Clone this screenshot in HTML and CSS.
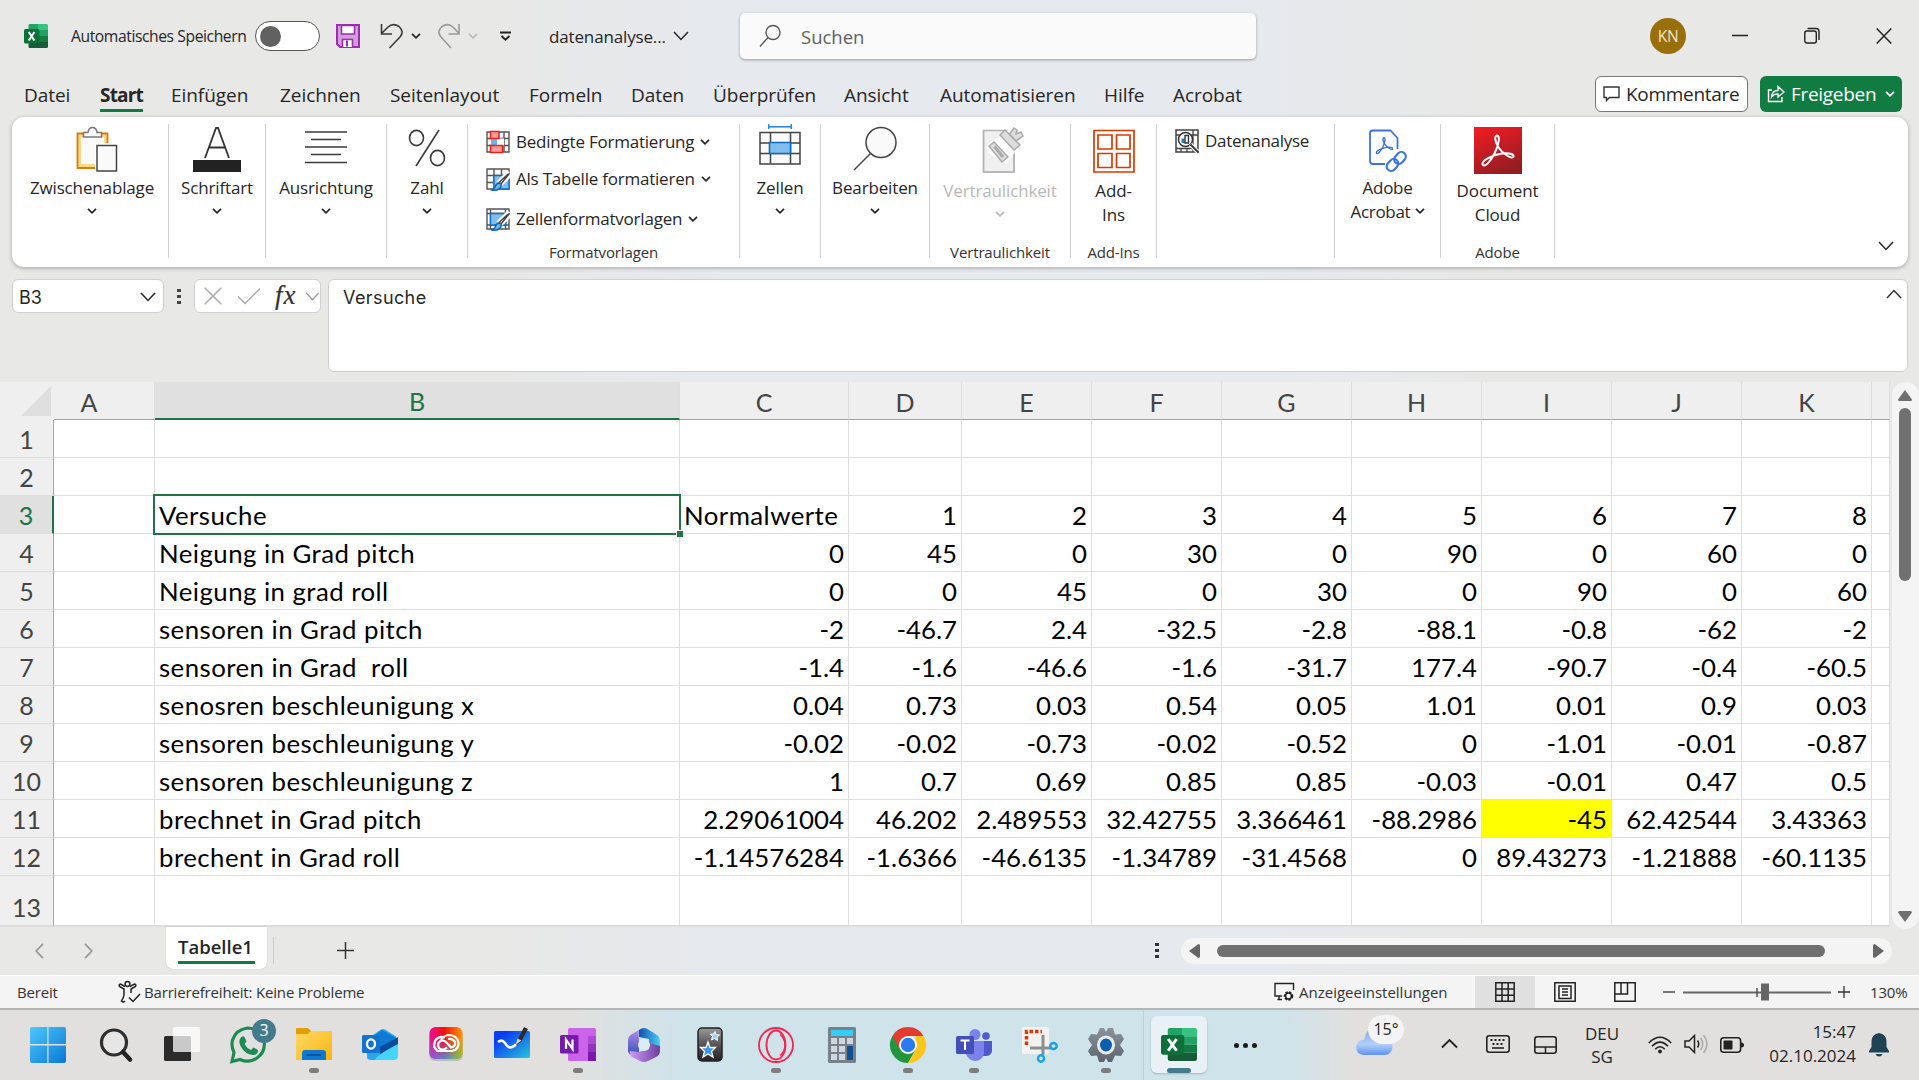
FILE: index.html
```html
<!DOCTYPE html>
<html lang="de">
<head>
<meta charset="utf-8">
<title>datenanalyse - Excel</title>
<link rel="stylesheet" href="styles.css">
</head>
<body>
<svg class="defs" width="0" height="0" aria-hidden="true">
  <defs>
    <linearGradient id="win" x1="0" y1="0" x2="1" y2="1"><stop offset="0" stop-color="#4cc8fb"/><stop offset="1" stop-color="#0a78d4"/></linearGradient>
    <linearGradient id="red" x1="0.3" y1="0" x2="0.7" y2="1"><stop offset="0" stop-color="#ec1c24"/><stop offset="1" stop-color="#8f1d22"/></linearGradient>
    <linearGradient id="fold" x1="0" y1="0" x2="1" y2="1"><stop offset="0" stop-color="#ffd968"/><stop offset="1" stop-color="#f9b50b"/></linearGradient>
    <linearGradient id="board" x1="0" y1="0" x2="1" y2="1"><stop offset="0.2" stop-color="#0b3cf5"/><stop offset="1" stop-color="#28c4d8"/></linearGradient>
    <linearGradient id="cc1" x1="0" y1="0" x2="1" y2="0"><stop offset="0" stop-color="#e8109c"/><stop offset="0.45" stop-color="#fb0d0d"/><stop offset="1" stop-color="#ff9a00"/></linearGradient>
    <linearGradient id="cc2" x1="0" y1="0" x2="1" y2="0"><stop offset="0" stop-color="#8a5cf0"/><stop offset="0.5" stop-color="#38a5f0"/><stop offset="1" stop-color="#6fd43c"/></linearGradient>
    <linearGradient id="fade" x1="0" y1="0" x2="0" y2="1"><stop offset="0.3" stop-color="#fff" stop-opacity="0"/><stop offset="1" stop-color="#fff"/></linearGradient>
    <mask id="ccm"><rect width="36" height="36" fill="url(#fade)"/></mask>
    <linearGradient id="m1" x1="0" y1="0" x2="1" y2="0"><stop offset="0" stop-color="#0f4fae"/><stop offset="1" stop-color="#4bd0f5"/></linearGradient>
    <linearGradient id="m2" x1="0" y1="0" x2="0" y2="1"><stop offset="0" stop-color="#b48be8"/><stop offset="1" stop-color="#2f4fb8"/></linearGradient>
    <linearGradient id="m3" x1="0" y1="0" x2="1" y2="0"><stop offset="0" stop-color="#cf9af2"/><stop offset="1" stop-color="#6b3fa0"/></linearGradient>
    <linearGradient id="dark" x1="0" y1="0" x2="0" y2="1"><stop offset="0" stop-color="#9a9a9a"/><stop offset="0.5" stop-color="#555"/><stop offset="1" stop-color="#222"/></linearGradient>
    <linearGradient id="cloud" x1="0" y1="0" x2="0" y2="1"><stop offset="0" stop-color="#7aa6f5"/><stop offset="0.6" stop-color="#b3cff9"/><stop offset="1" stop-color="#5d94f0"/></linearGradient>
    <linearGradient id="gear" x1="0" y1="0" x2="0" y2="1"><stop offset="0" stop-color="#8a929c"/><stop offset="1" stop-color="#5c656f"/></linearGradient>
    <symbol id="chev" viewBox="0 0 10 6"><path d="M1 .8 5 4.8 9 .8" fill="none" stroke="currentColor" stroke-width="1.7"/></symbol>
    <symbol id="chevL" viewBox="0 0 16 10"><path d="M1 1 8 8.500 15 1" fill="none" stroke="currentColor" stroke-width="1.500"/></symbol>
    <symbol id="excel" viewBox="0 0 24 24">
      <path d="M4.500 1.500Q4.500 0 6 0H14V6H4.500z" fill="#21a366"/><path d="M14 0H22.500Q24 0 24 1.500V6H14z" fill="#33c481"/>
      <path d="M4.500 6H14V12H4.500z" fill="#107c41"/><path d="M14 6H24V12H14z" fill="#21a366"/><path d="M4.500 12H14V18H4.500z" fill="#185c37"/><path d="M14 12H24V18H14z" fill="#107c41"/>
      <path d="M4.500 18H24V22.500Q24 24 22.500 24H6Q4.500 24 4.500 22.500z" fill="#185c37"/>
      <rect y="5" width="15.500" height="14.500" rx="1.500" fill="#0c7038"/><path d="M4.800 8 10.400 16.500M10.400 8 4.800 16.500" stroke="#fff" stroke-width="2"/>
    </symbol>
    <symbol id="brush" viewBox="0 0 24 22">
      <path d="M24 4 13 15" stroke="#fff" stroke-width="7"/><path d="M23 5 15 15l-2-1.500L20 7q2-2 3-2z" fill="#fff" stroke="#444" stroke-width="1.400"/>
      <path d="M14.500 14.500q2 3-1.500 5.500-4 2-7 1 3-1 3.500-4 1.500-3.500 5-2.500z" fill="#6db4ea" stroke="#0f64b5" stroke-width="1.400"/>
    </symbol>
    <symbol id="acro" viewBox="0 0 34 34">
      <path d="M2 31C-1 27 11 21 21 19.500 28 18.500 33 20 32.500 22.500 31.500 26 22 20 17.500 13.500 13.500 7 13.500 1.500 16 1.500 19 1.500 18.500 9 14 18.500 9.500 27.500 4.500 33 2 31z" fill="none" stroke="currentColor"/>
    </symbol>
  </defs>
</svg>

<div class="app">
  <header class="titlebar">
    <svg class="ic c1" width="24" height="24"><use href="#excel"/></svg>
    <span class="autosave">Automatisches Speichern</span>
    <span class="toggle"><i></i></span>
    <svg class="ic" width="24" height="24" viewBox="0 0 24 24"><path d="M1 1H23V23H4L1 20z" fill="#d59adf" stroke="#9b2fae" stroke-width="2"/><path d="M5.500 1.500H18.500V10H5.500zM6.500 23V15.500H16.500V23" fill="#fff" stroke="#9b2fae" stroke-width="1.600"/><path d="M10 16.500h2v6h-2z" fill="#9b2fae"/></svg>
    <svg class="ic" width="24" height="26" viewBox="0 0 24 26"><path d="M1.500 1V11H12M1.500 10.500 8 4q5-4.500 11-.5 5.500 5 1 10.500L9.500 25" fill="none" stroke="#3b3b3b" stroke-width="1.600"/></svg>
    <svg class="ic tiny" width="10" height="6"><use href="#chev"/></svg>
    <svg class="ic dim" width="24" height="26" viewBox="0 0 24 26"><path d="M22 1V11H11.500M22 10.500 16 4q-5-4.500-11-.5-5.500 5-1 10.500L14 25" fill="none" stroke="#999" stroke-width="1.600"/></svg>
    <svg class="ic tiny faint" width="10" height="6"><use href="#chev"/></svg>
    <svg class="ic" width="11" height="11" viewBox="0 0 11 11"><path d="M0 1.500H11M1.500 5 5.500 8.700 9.500 5" fill="none" stroke="#222" stroke-width="1.900"/></svg>
    <span class="docname">datenanalyse...</span>
    <svg class="ic" width="16" height="10"><use href="#chevL"/></svg>
    <div class="search"><svg width="22" height="24" viewBox="0 0 22 24"><circle cx="14" cy="8.500" r="7" fill="none" stroke="#555" stroke-width="1.400"/><path d="M9 13.500 1 22.500" stroke="#555" stroke-width="1.400"/></svg><span>Suchen</span></div>
    <span class="avatar">KN</span>
    <svg class="ic" width="16" height="18" viewBox="0 0 16 18"><path d="M0 8.500H16" stroke="#222" stroke-width="1.500"/></svg>
    <svg class="ic" width="16" height="18" viewBox="0 0 16 18"><rect x=".8" y="4" width="11.500" height="12" rx="2" fill="none" stroke="#222" stroke-width="1.400"/><path d="M3.500 1.500H12q3 0 3 3V13" fill="none" stroke="#222" stroke-width="1.400"/></svg>
    <svg class="ic" width="16" height="18" viewBox="0 0 16 18"><path d="M.7 1.500 15.300 16.500M15.300 1.500.7 16.500" stroke="#222" stroke-width="1.500"/></svg>
  </header>

  <nav class="tabs">
    <span>Datei</span><span class="on">Start</span><span>Einfügen</span><span>Zeichnen</span><span>Seitenlayout</span><span>Formeln</span><span>Daten</span><span>Überprüfen</span><span>Ansicht</span><span>Automatisieren</span><span>Hilfe</span><span>Acrobat</span>
    <div class="btn comments"><svg width="17" height="16" viewBox="0 0 17 16"><path d="M1 1H16V11.500H6.500L3.500 14.500V11.500H1z" fill="none" stroke="#333" stroke-width="1.400"/></svg>Kommentare</div>
    <div class="btn share"><svg width="18" height="18" viewBox="0 0 18 18"><path d="M5 5H1.500V16.500H15V12" fill="none" stroke="#fff" stroke-width="1.400"/><path d="M4.500 12Q5 5.500 11 5.500V1.500L17 7l-6 5V8.800Q7 8.500 4.500 12z" fill="none" stroke="#fff" stroke-width="1.300"/></svg>Freigeben<svg width="10" height="6"><use href="#chev"/></svg></div>
  </nav>

  <section class="ribbon">
    <div class="grp first">
      <div class="big"><svg width="42" height="48" viewBox="0 0 42 48"><path d="M1.500 7.500H31.500V42H1.500z" fill="#fbd98c" stroke="#e07b00" stroke-width="1.800"/><path d="M5 11H28V38H5z" fill="#fafafa"/><path d="M7.500 11V6.500H12Q12.500 1.500 16.500 1.500 20.500 1.500 21 6.500H25.500V11z" fill="#fff" stroke="#777" stroke-width="1.500"/><path d="M19 17H42V47H19z" fill="#fff"/><path d="M21 19.500H40.500V45H21z" fill="#fafafa" stroke="#444" stroke-width="1.500"/></svg></div>
      <p>Zwischenablage</p><svg class="cv" width="10" height="6"><use href="#chev"/></svg>
    </div>
    <div class="grp">
      <div class="big"><svg width="48" height="48" viewBox="0 0 48 48"><path d="M12 32 23 2H25L36 32M16 21.500H32" fill="none" stroke="#333" stroke-width="1.800"/><rect y="34" width="48" height="12" fill="#222"/></svg></div>
      <p>Schriftart</p><svg class="cv" width="10" height="6"><use href="#chev"/></svg>
    </div>
    <div class="grp">
      <div class="big"><svg width="42" height="48" viewBox="0 0 42 48"><path d="M0 6H42M6 13.500H36M0 21H42M6 28.500H36M0 36.500H42" stroke="#3b3b3b" stroke-width="1.500"/></svg></div>
      <p>Ausrichtung</p><svg class="cv" width="10" height="6"><use href="#chev"/></svg>
    </div>
    <div class="grp">
      <div class="big"><svg width="38" height="48" viewBox="0 0 38 48"><g fill="none" stroke="#3b3b3b" stroke-width="1.600"><ellipse cx="8.500" cy="12" rx="7" ry="7.600"/><ellipse cx="29.500" cy="32" rx="7" ry="7.600"/><path d="M31 4 8 40"/></g></svg></div>
      <p>Zahl</p><svg class="cv" width="10" height="6"><use href="#chev"/></svg>
    </div>
    <div class="grp styles">
      <div class="row"><svg width="24" height="24" viewBox="0 0 24 24"><path d="M1 2H23V22H1zM1 8.500H23M1 15.500H23M18 2V22" fill="#fafafa" stroke="#555" stroke-width="1.400"/><path d="M5 8.500h6v7H5z" fill="#6db4ea"/><path d="M11 8.500h7v7h-7z" fill="#fff"/><path d="M4.500 1.500H13V8.500H4.500zM4.500 15.500H16.500V22.500H4.500z" fill="#ff9a9a" stroke="#e2231a" stroke-width="1.500"/></svg><span>Bedingte Formatierung</span><svg width="10" height="6"><use href="#chev"/></svg></div>
      <div class="row"><svg width="24" height="24" viewBox="0 0 24 24"><path d="M1 2H23V22H1zM1 8.500H23M1 15.500H23M8 2V22M15.500 2V22" fill="#fafafa" stroke="#555" stroke-width="1.400"/><path d="M8 8.500H23V22H8z" fill="#83bdec" stroke="#0f6cbd" stroke-width="1.300"/><use href="#brush" y="2" width="24" height="22"/></svg><span>Als Tabelle formatieren</span><svg width="10" height="6"><use href="#chev"/></svg></div>
      <div class="row"><svg width="24" height="24" viewBox="0 0 24 24"><path d="M1 2H23V22H1zM1 6.500H23M1 18H23M4.500 2V22M19.500 2V22" fill="#fafafa" stroke="#555" stroke-width="1.400"/><path d="M4.500 6.500H20V18H4.500z" fill="#83bdec" stroke="#0f6cbd" stroke-width="1.300"/><use href="#brush" y="2" width="24" height="22"/></svg><span>Zellenformatvorlagen</span><svg width="10" height="6"><use href="#chev"/></svg></div>
      <small>Formatvorlagen</small>
    </div>
    <div class="grp">
      <div class="big"><svg width="42" height="48" viewBox="0 0 42 48"><path d="M1 6.500H41V38H1zM11.500 6.500V38M31.500 6.500V38M1 17H41M1 27.500H41" fill="#fafafa" stroke="#444" stroke-width="1.500"/><path d="M10.500 16.500H31.500V27.500H10.500z" fill="#83bdec" stroke="#0f6cbd" stroke-width="1.600"/><path d="M10 0H32" stroke="#2b88d8" stroke-width="1.600" transform="translate(0 .8)"/><path d="M9.700 -2v5M32.300 -2v5" stroke="#2b88d8" stroke-width="1.500"/></svg></div>
      <p>Zellen</p><svg class="cv" width="10" height="6"><use href="#chev"/></svg>
    </div>
    <div class="grp">
      <div class="big"><svg width="44" height="48" viewBox="0 0 44 48"><ellipse cx="28" cy="16.500" rx="15" ry="15" fill="#fafafa" stroke="#444" stroke-width="1.500"/><path d="M17.500 27.500 1 44" stroke="#444" stroke-width="1.500"/></svg></div>
      <p>Bearbeiten</p><svg class="cv" width="10" height="6"><use href="#chev"/></svg>
    </div>
    <div class="grp tall off">
      <div class="big"><svg width="42" height="48" viewBox="0 0 42 48"><path d="M1.500 4.500H32V46H1.500z" fill="#f0f0f0" stroke="#b5b5b5" stroke-width="1.500"/><path d="M5 19 17 11 31 0H42V18L33 26 24 38 5 26z" fill="#fff"/><path d="M1.500 4.500V46H32V28" fill="none" stroke="#b5b5b5" stroke-width="1.500"/><g fill="#ddd" stroke="#aaa" stroke-width="1.500"><path d="M12 16 7 20 20 36 26 31z"/><path d="M12.500 20.500 21 31" stroke-width="3"/><path d="M23 4 18 9 32 24 38 19z"/><path d="M27.500 8 32 2 35 4 34 8 39 6 41 10 34 15z"/></g></svg></div>
      <p>Vertraulichkeit</p><svg class="cv" width="10" height="6"><use href="#chev"/></svg>
      <small>Vertraulichkeit</small>
    </div>
    <div class="grp tall">
      <div class="big"><svg width="42" height="48" viewBox="0 0 42 48"><g fill="#fff" stroke="#d83b01" stroke-width="1.700"><path d="M1 4.500H41V46H1z"/><path d="M5 9H19V23H5zM23.500 9H37V23H23.500zM5 27.500H19V41.500H5zM23.500 27.500H37V41.500H23.500z"/></g></svg></div>
      <p>Add-<br>Ins</p>
      <small>Add-Ins</small>
    </div>
    <div class="grp analysis">
      <div class="row"><svg width="24" height="24" viewBox="0 0 24 24"><path d="M1 1H23V23H1z" fill="#fafafa" stroke="#444" stroke-width="1.500"/><path d="M1 6H23M1 19.500H23M18 1V23M6 19V23M12 19V23" stroke="#444" stroke-width="1.300"/><circle cx="10.500" cy="10.500" r="7" fill="#fff" stroke="#333" stroke-width="1.500"/><path d="M15.500 15.500 23 23" stroke="#fff" stroke-width="4"/><path d="M15.500 15.500 23.500 23.500" stroke="#333" stroke-width="1.800"/><path d="M6.500 9.500h3v4.500h-3z" fill="#1f7fd0"/><path d="M10 6.500h3.500V14H10z" fill="#fff" stroke="#333" stroke-width="1.400"/></svg><span>Datenanalyse</span></div>
    </div>
    <div class="grp adobe">
      <div class="big"><svg width="38" height="48" viewBox="0 0 38 48"><path d="M16 38H4Q1 38 1 35V7Q1 4.500 4 4.500H21.500L28.500 12V23" fill="none" stroke="#3b74e0" stroke-width="1.800"/><svg x="6.500" y="11" width="18" height="18" class="blue"><use href="#acro" stroke-width="2.600"/></svg><g fill="none" stroke="#3b74e0" stroke-width="2.100"><rect x="-4.500" y="-6.500" width="9" height="13" rx="4.500" transform="translate(31 32) rotate(42)"/><rect x="-4.500" y="-6.500" width="9" height="13" rx="4.500" transform="translate(23.500 39) rotate(42)"/></g></svg></div>
      <p>Adobe<br>Acrobat&nbsp;<svg width="10" height="6" class="inl"><use href="#chev"/></svg></p>
    </div>
    <div class="grp tall">
      <div class="big"><svg width="48" height="48" viewBox="0 0 48 48"><rect y="1" width="48" height="47" fill="url(#red)"/><svg x="7" y="8" width="34" height="34" class="white"><use href="#acro" stroke-width="2"/></svg></svg></div>
      <p>Document<br>Cloud</p>
      <small>Adobe</small>
    </div>
    <div class="collapse"><svg width="16" height="10"><use href="#chevL"/></svg></div>
  </section>

  <section class="formula">
    <div class="box name"><span>B3</span><svg width="16" height="10"><use href="#chevL"/></svg></div>
    <svg class="dots" width="4" height="18" viewBox="0 0 4 18"><path d="M0 1h4v3H0zM0 7h4v3H0zM0 13h4v3H0z" fill="#444"/></svg>
    <div class="box fx">
      <svg width="18" height="18" viewBox="0 0 18 18"><path d="M.7.7 17.300 17.300M17.300.7.7 17.300" stroke="#aaa" stroke-width="1.500"/></svg>
      <svg width="24" height="18" viewBox="0 0 24 18"><path d="M1 9.500 8 16.500 23 1.500" fill="none" stroke="#aaa" stroke-width="1.500"/></svg>
      <em>fx</em>
      <svg class="dim" width="15" height="9"><use href="#chevL"/></svg>
    </div>
    <div class="box input"><span>Versuche</span><svg width="16" height="10" viewBox="0 0 16 10"><path d="M1 9 8 1.500 15 9" fill="none" stroke="#333" stroke-width="1.500"/></svg></div>
  </section>

  <main class="sheet">
    <table>
      <colgroup><col class="w54"><col class="w101"><col class="w525"><col class="w169"><col class="w113"><col span="7" class="w130"><col class="w18"></colgroup>
      <thead><tr><th class="corner"><svg width="30" height="30" viewBox="0 0 30 30"><path d="M30 0V30H0z" fill="#dedede"/></svg></th><th class="colA">A</th><th class="sel">B</th><th>C</th><th>D</th><th>E</th><th>F</th><th>G</th><th>H</th><th>I</th><th>J</th><th>K</th><th></th></tr></thead>
      <tbody>
      <tr><th>1</th><td></td><td></td><td></td><td></td><td></td><td></td><td></td><td></td><td></td><td></td><td></td><td></td></tr>
      <tr><th>2</th><td></td><td></td><td></td><td></td><td></td><td></td><td></td><td></td><td></td><td></td><td></td><td></td></tr>
      <tr><th class="sel">3</th><td></td><td class="l cur">Versuche<i class="frame"></i><i class="handle"></i></td><td class="l">Normalwerte</td><td>1</td><td>2</td><td>3</td><td>4</td><td>5</td><td>6</td><td>7</td><td>8</td><td></td></tr>
      <tr><th>4</th><td></td><td class="l">Neigung in Grad pitch</td><td>0</td><td>45</td><td>0</td><td>30</td><td>0</td><td>90</td><td>0</td><td>60</td><td>0</td><td></td></tr>
      <tr><th>5</th><td></td><td class="l">Neigung in grad roll</td><td>0</td><td>0</td><td>45</td><td>0</td><td>30</td><td>0</td><td>90</td><td>0</td><td>60</td><td></td></tr>
      <tr><th>6</th><td></td><td class="l">sensoren in Grad pitch</td><td>-2</td><td>-46.7</td><td>2.4</td><td>-32.5</td><td>-2.8</td><td>-88.1</td><td>-0.8</td><td>-62</td><td>-2</td><td></td></tr>
      <tr><th>7</th><td></td><td class="l">sensoren in Grad  roll</td><td>-1.4</td><td>-1.6</td><td>-46.6</td><td>-1.6</td><td>-31.7</td><td>177.4</td><td>-90.7</td><td>-0.4</td><td>-60.5</td><td></td></tr>
      <tr><th>8</th><td></td><td class="l">senosren beschleunigung x</td><td>0.04</td><td>0.73</td><td>0.03</td><td>0.54</td><td>0.05</td><td>1.01</td><td>0.01</td><td>0.9</td><td>0.03</td><td></td></tr>
      <tr><th>9</th><td></td><td class="l">sensoren beschleunigung y</td><td>-0.02</td><td>-0.02</td><td>-0.73</td><td>-0.02</td><td>-0.52</td><td>0</td><td>-1.01</td><td>-0.01</td><td>-0.87</td><td></td></tr>
      <tr><th>10</th><td></td><td class="l">sensoren beschleunigung z</td><td>1</td><td>0.7</td><td>0.69</td><td>0.85</td><td>0.85</td><td>-0.03</td><td>-0.01</td><td>0.47</td><td>0.5</td><td></td></tr>
      <tr><th>11</th><td></td><td class="l">brechnet in Grad pitch</td><td>2.29061004</td><td>46.202</td><td>2.489553</td><td>32.42755</td><td>3.366461</td><td>-88.2986</td><td class="hl">-45</td><td>62.42544</td><td>3.43363</td><td></td></tr>
      <tr><th>12</th><td></td><td class="l">brechent in Grad roll</td><td>-1.14576284</td><td>-1.6366</td><td>-46.6135</td><td>-1.34789</td><td>-31.4568</td><td>0</td><td>89.43273</td><td>-1.21888</td><td>-60.1135</td><td></td></tr>
      <tr class="last"><th>13</th><td></td><td></td><td></td><td></td><td></td><td></td><td></td><td></td><td></td><td></td><td></td><td></td></tr>
      </tbody>
    </table>
    <div class="vscroll">
      <svg width="14" height="11" viewBox="0 0 14 11"><path d="M7 0 14 9.500Q14 11 12.500 11H1.500Q0 11 0 9.500z" fill="#707070"/></svg>
      <i></i>
      <svg class="dn" width="14" height="11" viewBox="0 0 14 11"><path d="M7 11 14 1.500Q14 0 12.500 0H1.500Q0 0 0 1.500z" fill="#707070"/></svg>
    </div>
  </main>

  <section class="sheettabs">
    <svg class="n1" width="9" height="16" viewBox="0 0 9 16"><path d="M8 .8 1.200 8 8 15.200" fill="none" stroke="#999" stroke-width="1.700"/></svg>
    <svg class="n2" width="9" height="16" viewBox="0 0 9 16"><path d="M1 .8 7.800 8 1 15.200" fill="none" stroke="#999" stroke-width="1.700"/></svg>
    <div class="tab"><span>Tabelle1</span></div>
    <i class="sep"></i>
    <svg class="plus" width="17" height="17" viewBox="0 0 17 17"><path d="M0 8.500H17M8.500 0V17" stroke="#333" stroke-width="1.500"/></svg>
    <svg class="d2" width="4" height="17" viewBox="0 0 4 17"><path d="M0 1h4v3H0zM0 7h4v3H0zM0 13h4v3H0z" fill="#333"/></svg>
    <div class="hscroll">
      <svg width="11" height="14" viewBox="0 0 11 14"><path d="M0 7 9 .3Q11 0 11 1.500V12.500Q11 14 9 13.700z" fill="#666"/></svg>
      <i></i>
      <svg width="11" height="14" viewBox="0 0 11 14"><path d="M11 7 2 .3Q0 0 0 1.500V12.500Q0 14 2 13.700z" fill="#666"/></svg>
    </div>
  </section>

  <footer class="status">
    <span class="ready">Bereit</span>
    <svg width="23" height="22" viewBox="0 0 23 22"><g fill="none" stroke="#222" stroke-width="1.500"><circle cx="9.500" cy="3" r="2.400"/><path d="M7 5.500 2.500 3Q.5 3.500 1.500 5.500L6 8V14Q5.500 17 3.500 20 5 22 7 20M12 5.500 16.500 3Q18.500 3.500 17.500 5.500L13 8V12M11 16.500l4 4 7-7.500"/></g></svg>
    <span class="acc">Barrierefreiheit: Keine Probleme</span>
    <svg width="22" height="20" viewBox="0 0 22 20"><path d="M8 14H1V1.500H19.500V8M3.500 17.500H8M5 14V17" fill="none" stroke="#222" stroke-width="1.400"/><circle cx="14.500" cy="14" r="3.600" fill="none" stroke="#222" stroke-width="2.400" stroke-dasharray="2.200 1.200"/><circle cx="14.500" cy="14" r="3" fill="none" stroke="#222" stroke-width="1.300"/></svg>
    <span class="disp">Anzeigeeinstellungen</span>
    <span class="view on"><svg width="20" height="20" viewBox="0 0 20 20"><path d="M.8.800H19.200V19.200H.8zM7 .8V19.200M13.200.8V19.200M.8 7H19.200M.8 13.200H19.200" fill="none" stroke="#222" stroke-width="1.500"/></svg></span>
    <span class="view"><svg width="22" height="20" viewBox="0 0 22 20"><path d="M.8.800H21.200V19.200H.8zM5 4H17V16.500H5zM8 7H14M8 10H14M8 13H14" fill="none" stroke="#222" stroke-width="1.500"/></svg></span>
    <span class="view"><svg width="22" height="20" viewBox="0 0 22 20"><path d="M.8.800H21.200V19.200H.8zM.8 12H13.500V.8M7 .8V12" fill="none" stroke="#222" stroke-width="1.500"/></svg></span>
    <svg width="12" height="18" viewBox="0 0 12 18"><path d="M0 9H12" stroke="#333" stroke-width="1.300"/></svg>
    <svg class="slider" width="148" height="18" viewBox="0 0 148 18"><path d="M0 9.500H148" stroke="#666" stroke-width="1.800"/><path d="M74 5v9" stroke="#555" stroke-width="1.500"/><rect x="78" y=".5" width="8" height="17" fill="#666"/></svg>
    <svg width="12" height="18" viewBox="0 0 12 18"><path d="M0 9H12M6 3V15" stroke="#333" stroke-width="1.300"/></svg>
    <span class="pct">130%</span>
  </footer>
</div>

<div class="taskbar">
  <div class="app-ic start"><svg width="36" height="36"><path d="M0 2Q0 0 2 0H17.300V17H0zM18.500 0H34Q36 0 36 2V17H18.500zM0 18.500H17.300V36H2Q0 36 0 34zM18.500 18.500H36V34Q36 36 34 36H18.500z" fill="url(#win)"/></svg></div>
  <div class="app-ic"><svg width="36" height="36" viewBox="0 0 36 36"><circle cx="16" cy="15.500" r="12.500" fill="#e6e6e6" stroke="#2e2e2e" stroke-width="3.200"/><path d="M25 25 32 32.500" stroke="#222" stroke-width="4.500" stroke-linecap="round"/></svg></div>
  <div class="app-ic"><svg width="36" height="36" viewBox="0 0 36 36"><rect y="9" width="27" height="25" rx="1.500" fill="#2b2b2b"/><rect x="9" width="27" height="25" rx="1.500" fill="#fff" fill-opacity=".75"/></svg></div>
  <div class="app-ic"><svg width="38" height="38" viewBox="0 0 38 38"><path d="M3 35.500 5 26.500Q2 20.500 3.500 14 7 3.500 18.500 2 32 2.500 35 14 37 26 28 32 20 37.500 11 33.500z" fill="none" stroke="#1d8a52" stroke-width="3.200"/><path d="M12 11.500q2-2 3.500-.5l2 4.500-2 2.500q2 4 6.500 6l2.500-2.500 4.500 2.500q0 5-5 5Q16 28.500 11.500 20 9 14.500 12 11.500z" fill="#1d8a52"/></svg><b class="badge">3</b></div>
  <div class="app-ic run"><svg width="36" height="36" viewBox="0 0 36 36"><path d="M0 2Q0 1 1 1H12L15 4V9H0z" fill="#e0a000"/><path d="M0 7H12L15 4H35Q36 4 36 5V33H0z" fill="url(#fold)"/><path d="M6 33V26Q6 23 9 23H27Q30 23 30 26V33z" fill="#0f78d0"/><path d="M10.500 28H25" stroke="#0b4f8c" stroke-width="1.600"/></svg></div>
  <div class="app-ic"><svg width="36" height="36" viewBox="0 0 36 36"><path d="M5 12 19 2.500Q21 1.500 23 2.500L34 9.500V30Q34 33 31 33H9Q5 33 5 30z" fill="#28a8ea"/><path d="M12 9 20 3 34 11 18 23z" fill="#0f7bd5"/><path d="M36 10V19L18 29V20z" fill="#0a4b9e"/><path d="M36 17V29Q36 33 32 33H13Q13 29 36 17z" fill="#45d5fb"/><rect y="8" width="18" height="18" rx="1.500" fill="#1173cf"/><ellipse cx="9" cy="17" rx="4" ry="4.600" fill="none" stroke="#fff" stroke-width="2.300"/></svg></div>
  <div class="app-ic"><svg width="36" height="36" viewBox="0 0 36 36"><rect x="1" y="1" width="34" height="33" rx="6" fill="#999" opacity=".5"/><rect x="1.500" width="33" height="32" rx="6" fill="url(#cc1)"/><rect x="1.500" width="33" height="32" rx="6" fill="url(#cc2)" mask="url(#ccm)"/><g fill="none" stroke="#fff" stroke-width="2.200"><path d="M17 10.500Q11 8.500 7.500 13 4 20 9.500 24H24Q31 22.500 30.500 15.500 29 8.500 21.500 8 16 8 13 13"/><path d="M19 20.500Q15 24.500 11 21 8.500 16.500 12.500 14 16 12.500 18.500 15.500L23 20.500Q28 19.500 27 15 25 11 20 12"/></g></svg></div>
  <div class="app-ic"><svg width="36" height="36" viewBox="0 0 36 36"><rect y="4" width="36" height="27" rx="1.500" fill="url(#board)"/><path d="M4 15Q8 12 11 16 14 21.500 18 20 21 19 22 17" fill="none" stroke="#fff" stroke-width="2.600"/><path d="M23.500 13 30 0 34 2 27 15 22 18z" fill="#2c2c2c"/><path d="M23.500 11.500 27.500 13.500 21.500 18z" fill="#d8d0c8"/></svg></div>
  <div class="app-ic run"><svg width="36" height="36" viewBox="0 0 36 36"><rect x="8" y="1" width="28" height="33" rx="1.500" fill="#ca64ea"/><path d="M28 9h8v8h-8z" fill="#ae4bd5"/><path d="M28 17h8v8h-8z" fill="#9332bf"/><path d="M28 25h8v9h-8z" fill="#7719aa"/><rect y="8" width="18.500" height="18.500" rx="1.500" fill="#7719aa"/><path d="M6 22V12.500L12.500 22V12.500" fill="none" stroke="#fff" stroke-width="2.200"/></svg></div>
  <div class="app-ic"><svg width="34" height="36" viewBox="0 0 34 36"><path d="M12 3Q17-1 22 3L30 8Q33 10 33 13V22L22 16V12L12 10z" fill="url(#m1)"/><path d="M12 3 5 7Q1 9 1 14V24Q2 28 6 29L12 25V12Q11 8 12 3z" fill="url(#m2)"/><path d="M33 19V24Q33 28 29 30L21 34Q17 36 13 34L5 30Q2 27 3 24L12 25 22 22V16z" fill="url(#m3)"/><circle cx="17" cy="18" r="6" fill="#dcebf0"/></svg></div>
  <div class="app-ic"><svg width="26" height="36" viewBox="0 0 26 36"><rect x="1" y="1" width="24" height="33" rx="4" fill="url(#dark)" stroke="#222" stroke-width="1.500"/><path d="M11 15l2 5.500 5.500 0-4 4 1.500 5.500-5-3-5 3 1.500-5.500-4-4 5.500 0z" fill="#3f97e8" stroke="#fff" stroke-width="1.300"/><path d="M18 4.500l1 3 3.500.5-2.500 2 .5 3.500-3-2-3 1.500 1-3.500-2-2.500 3 0z" fill="#9fd2fb" stroke="#fff" stroke-width="1"/></svg></div>
  <div class="app-ic run"><svg width="36" height="36" viewBox="0 0 36 36"><g fill="none" stroke="#f5244f"><ellipse cx="18" cy="18" rx="17" ry="17" stroke-width="1.800"/><ellipse cx="18" cy="18" rx="9.500" ry="14.500" stroke-width="1.800"/><path d="M22 7.500Q27 11.500 27 18T22 28.500" stroke-width="1.500"/></g></svg></div>
  <div class="app-ic"><svg width="28" height="36" viewBox="0 0 28 36"><rect width="28" height="36" rx="1.500" fill="#77818c"/><rect x="3" y="3" width="22" height="6" fill="#35cdf5"/><g fill="#d0d5de"><path d="M3 11h6v6H3zM11 11h6v6h-6zM19 11h6v6h-6zM3 19h6v6H3zM11 19h6v6h-6zM3 27h6v6H3zM11 27h6v6h-6z"/></g><rect x="19" y="19" width="6" height="14" fill="#10508f"/></svg></div>
  <div class="app-ic run"><svg width="36" height="36" viewBox="0 0 36 36"><path d="M2.400 9A18 18 0 0 1 33.600 9H18z" fill="#e33b2e"/><path d="M2.400 9A18 18 0 0 0 18 36L25.800 22.500 18 18z" fill="#22963f"/><path d="M33.600 9A18 18 0 0 1 18 36L25.800 22.500V9z" fill="#fcc51b"/><path d="M2.400 9 10 22.500 18 9z" fill="#e33b2e"/><circle cx="18" cy="18" r="9" fill="#fff"/><circle cx="18" cy="18" r="7.200" fill="#2b7af0"/></svg></div>
  <div class="app-ic run"><svg width="36" height="36" viewBox="0 0 36 36"><circle cx="19" cy="7.500" r="5.500" fill="#7b83eb"/><circle cx="30" cy="9" r="3.800" fill="#5059c9"/><path d="M24 14H36V24Q35 29 30 29H24z" fill="#5059c9"/><path d="M10 14H28V27Q26 34 19 34 12 33 10 27z" fill="#7b83eb"/><rect y="9" width="18" height="18" rx="1.500" fill="#464eb8"/><path d="M4.500 13.500H13.500M9 13.500V23" stroke="#fff" stroke-width="2"/></svg></div>
  <div class="app-ic"><svg width="36" height="36" viewBox="0 0 36 36"><rect width="27" height="27" rx="2" fill="#f4f2f1"/><path d="M4.500 18V4.500H20" fill="none" stroke="#d83b01" stroke-width="3.500" stroke-dasharray="3.500 2"/><path d="M21 8V28M8 21H29" stroke="#8a8f94" stroke-width="3"/><ellipse cx="31.500" cy="19" rx="3.200" ry="3" fill="none" stroke="#19a0e8" stroke-width="2.400"/><ellipse cx="19" cy="31.500" rx="3" ry="3.200" fill="none" stroke="#19a0e8" stroke-width="2.400"/></svg></div>
  <div class="app-ic run"><svg width="36" height="36" viewBox="0 0 36 36"><path d="M12 1H16L18 5 20 1H25L27 7.500 33 7 36 12 32 18 36 24 33 29 27 28.500 24 35H20L18 31 16 35H11L9 28.500 3 29 0 24 4 18 0 12 3 7 9 7.500z" fill="url(#gear)"/><ellipse cx="18" cy="18" rx="9" ry="9.500" fill="#e8eaec"/><ellipse cx="18" cy="18" rx="6" ry="6.500" fill="#0a5fb0"/></svg></div>
  <i class="split"></i>
  <div class="app-ic active"><svg width="36" height="33" viewBox="0 0 24 24" preserveAspectRatio="none"><use href="#excel"/></svg></div>
  <div class="app-ic more"><i></i><i></i><i></i></div>
  <div class="weather"><svg width="37" height="30" viewBox="0 0 37 30"><path d="M8 30Q0 29 0 22 1 15 8 14.500 10 3 20 3 29 4 30.500 14 37 16 36.500 22 36 29 29 30z" fill="url(#cloud)"/></svg><span>15°</span></div>
  <svg class="up" width="17" height="11" viewBox="0 0 17 11"><path d="M1 9.500 8.500 2 16 9.500" fill="none" stroke="#222" stroke-width="1.900"/></svg>
  <svg class="kb" width="24" height="18" viewBox="0 0 24 18"><rect x=".8" y=".8" width="22.400" height="16.400" rx="2.500" fill="none" stroke="#222" stroke-width="1.600"/><path d="M4.500 5H20M6.500 9H18" stroke="#222" stroke-width="1.900" stroke-dasharray="2 2"/><path d="M6 13H18" stroke="#222" stroke-width="1.600"/></svg>
  <svg class="pad" width="23" height="18" viewBox="0 0 23 18"><rect x=".8" y=".8" width="21.400" height="16.400" rx="2.500" fill="none" stroke="#222" stroke-width="1.600"/><path d="M1 11H22M11.500 11V17" stroke="#222" stroke-width="1.500"/></svg>
  <div class="lang">DEU<br>SG</div>
  <svg class="wifi" width="24" height="18" viewBox="0 0 24 18"><g fill="none" stroke="#222" stroke-width="1.600"><path d="M.8 7Q12-4.500 23.200 7M4 10.200Q12 2 20 10.200M7.200 13.300Q12 8.300 16.800 13.300"/></g><circle cx="12" cy="15.500" r="1.900" fill="#222"/></svg>
  <svg class="spk" width="25" height="20" viewBox="0 0 25 20"><path d="M1 7H5L10.500 1.500V18.500L5 13H1z" fill="none" stroke="#222" stroke-width="1.500"/><path d="M13.500 6.500Q16 10 13.500 13.500" fill="none" stroke="#222" stroke-width="1.500"/><path d="M16.500 4Q21 10 16.500 16M19.500 1Q26.500 10 19.500 19" fill="none" stroke="#aaa" stroke-width="1.500"/></svg>
  <svg class="bat" width="25" height="16" viewBox="0 0 25 16"><rect x=".8" y=".8" width="19.800" height="14.400" rx="3" fill="none" stroke="#222" stroke-width="1.600"/><rect x="3.500" y="3.500" width="9" height="9" rx="1" fill="#222"/><path d="M21 5.500q3 0 3 2.500t-3 2.500z" fill="#222"/></svg>
  <div class="clock">15:47<br>02.10.2024</div>
  <svg class="bell" width="20" height="24" viewBox="0 0 20 24"><path d="M10 0Q17 1 17.500 8V14L20 18V19.500H0V18L2.500 14V8Q3 1 10 0zM6.500 21H13.500Q12.500 23.500 10 23.500T6.500 21z" fill="#1f4254"/></svg>
</div>
</body>
</html>
```
FILE: styles.css
```css
* { box-sizing: border-box; }
body { margin: 0; width: 1919px; height: 1080px; overflow: hidden; font-family: "Open Sans", "Noto Sans", sans-serif; color: #262626; display: flex; flex-direction: column; }
svg { display: block; flex: none; overflow: visible; }
.defs { position: absolute; }
i { font-style: normal; display: block; }
p { margin: 0; }

.app { height: 1010px; flex: none; display: flex; flex-direction: column; background: linear-gradient(90deg, #e8e8e6 0, #e8e8e6 480px, #e6e9ee 720px, #e6e9ee 1250px, #e8e8e6 1500px); }

/* title bar */
.titlebar { height: 72px; flex: none; display: grid; align-items: center; grid-template-columns: 47px 184px 81px 44px 31px 26px 31px 32px 49px 124px 67px 910px 82px 72px 72px 43px; padding-left: 24px; color: #262626; }
.autosave { font-size: 15.7px; letter-spacing: -0.43px; white-space: nowrap; }
.toggle { width: 65px; height: 30px; border: 1px solid #555; border-radius: 15px; background: #fff; padding: 4px; }
.toggle i { width: 21px; height: 21px; border-radius: 50%; background: #616161; }
.faint { color: #bbb; }
.docname { font-size: 17px; letter-spacing: -0.15px; white-space: nowrap; }
.search { width: 516px; height: 46px; background: #fafafa; border-radius: 5px; box-shadow: 0 1px 3px rgba(0,0,0,.35); display: flex; align-items: center; gap: 20px; padding-left: 19px; font-size: 18.500px; color: #616161; }
.avatar { width: 36px; height: 36px; border-radius: 50%; background: #986f0b; color: #eee3c8; font-size: 15.500px; letter-spacing: -0.4px; line-height: 36px; text-align: center; }

/* tabs */
.tabs { height: 45px; flex: none; display: grid; grid-template-columns: 76px 71px 109px 110px 139px 102px 82px 131px 96px 164px 69px 422px 165px 142px; padding: 4px 0 0 24px; font-size: 19px; line-height: 39px; white-space: nowrap; letter-spacing: -0.05px; }
.tabs .on { font-weight: 700; letter-spacing: -0.8px; width: 43px; height: 36px; border-bottom: 3px solid #107c41; }
.btn { height: 36px; border-radius: 6px; display: flex; align-items: center; line-height: 34px; letter-spacing: -0.3px; }
.comments { width: 153px; background: #fff; border: 1px solid #777; padding-left: 7px; gap: 6px; }
.share { background: #107c41; color: #fff; padding-left: 7px; gap: 6px; }
.share svg:last-child { margin-left: 3px; }

/* ribbon */
.ribbon { margin: 0 11px 0 12px; height: 150px; flex: none; background: #fff; border-radius: 12px; box-shadow: 0 1px 4px rgba(0,0,0,.3); display: grid; grid-template-columns: 157px 97px 121px 81px 272px 81px 109px 141px 86px 178px 106px 114px 1fr; padding-top: 7px; font-size: 17px; letter-spacing: -0.14px; }
.grp { height: 134px; border-right: 1px solid #d0d0d0; display: flex; flex-direction: column; align-items: center; text-align: center; line-height: 24px; padding-top: 2px; }
.first { padding-left: 4px; }
.first .big { margin-left: 9px; }
.off .big { margin-left: 6px; }
.big { height: 50px; }
.tall .big { height: 53px; }
.grp p { white-space: nowrap; }
.cv { margin-top: 8px; }
.off p, .off .cv { color: #b8b8b8; }
.grp small { margin: auto 0 -3px; font-size: 15px; line-height: 18px; color: #333; }
.styles { padding: 0; align-items: stretch; }
.row { display: flex; align-items: center; height: 39px; gap: 6px; padding-left: 18px; }
.styles .row:first-child { height: 35px; }
.styles .row:nth-child(2) { height: 40px; }
.styles .row { letter-spacing: -0.22px; }
.row span { white-space: nowrap; }
.analysis { padding: 0; align-items: stretch; }
.analysis .row { height: 34px; gap: 6px; letter-spacing: -0.3px; }
.inl { display: inline-block; vertical-align: 4px; }
.adobe p { letter-spacing: -0.3px; }
.blue { color: #3b74e0; }
.white { color: #fff; }
.collapse { display: flex; justify-content: flex-end; align-items: flex-end; padding: 0 14px 16px 0; }

/* formula bar */
.formula { height: 115px; flex: none; display: flex; align-items: flex-start; padding: 12px 0 0 12px; font-family: "Inter", "Liberation Sans", sans-serif; font-size: 18px; }
.box { background: #fff; border: 1px solid #cfcfcf; border-radius: 6px; display: flex; }
.name { width: 152px; height: 34px; align-items: center; justify-content: space-between; padding: 2px 7px 0 6px; }
.dots { margin: 9px 13px 0 13px; }
.fx { width: 127px; height: 34px; align-items: center; padding-left: 9px; margin-right: 7px; }
.fx svg:nth-child(2) { margin-left: 15px; }
.fx em { font: italic 400 27px/30px "Liberation Serif", serif; -webkit-text-stroke: .2px #333; color: #333; margin: -2px 8px 0 14px; letter-spacing: 1px; }
.dim { color: #999; }
.input { width: 1580px; height: 93px; justify-content: space-between; padding: 8px 5px 0 14px; line-height: 19px; letter-spacing: 0.4px; }
.input svg { margin-top: 1px; }

/* sheet */
.sheet { height: 545px; flex: none; display: flex; }
table { width: 1890px; table-layout: fixed; border-spacing: 0; font-family: "Lato", "Liberation Sans", sans-serif; font-size: 25.8px; color: #000; background: #fff; flex: none; height: 545px; }
.w54 { width: 54px; } .w101 { width: 101px; } .w525 { width: 525px; } .w169 { width: 169px; } .w113 { width: 113px; } .w130 { width: 130px; } .w18 { width: 18px; }
th, td { padding: 2px 4px 0; height: 38px; line-height: 35px; border-right: 1px solid #dedede; border-bottom: 1px solid #dedede; white-space: pre; text-align: right; }
th { font-weight: 400; font-size: 25px; color: #444; background: #efefef; text-align: center; padding: 2px 0 0; }
thead th { border-bottom-color: #a5a5a5; line-height: 33px; padding-top: 3px; }
thead .corner { border-color: #efefef; padding-top: 0; }
.corner svg { margin: 0 0 0 21px; }
thead .colA { padding-right: 30px; }
tbody th { border-right-color: #a5a5a5; }
thead .sel { background: #e0e0e0; color: #217346; border-bottom: 2px solid #217346; }
tbody .sel { background: #e0e0e0; color: #217346; border-right: 2px solid #217346; }
.l { text-align: left; letter-spacing: 0.45px; }
.cur { position: relative; }
.frame { position: absolute; inset: -2px -2px -2px -2px; border: 2px solid #217346; }
.handle { position: absolute; right: -4px; bottom: -4px; width: 7px; height: 7px; background: #217346; border: solid #fff; border-width: 1px 0 0 1px; }
.hl { background: #ff0; border-color: #ff0; }
.last th, .last td { height: 51px; border-bottom: 2px solid #dcdcdc; vertical-align: bottom; line-height: 33px; padding: 0 0 1px; }
.vscroll { width: 27px; margin-left: 2px; background: #f4f4f4; border-radius: 14px; height: 547px; padding: 8px 6px 7px; display: flex; flex-direction: column; flex: none; }
.vscroll i { width: 12px; height: 173px; border-radius: 6px; background: #707070; margin: 7px 0 0 1px; }
.dn { margin-top: auto; }

/* sheet tabs */
.sheettabs { height: 48px; flex: none; display: flex; align-items: center; padding-bottom: 1px; }
.n1 { margin-left: 35px; }
.n2 { margin-left: 40px; }
.tab { margin-left: 73px; width: 101px; height: 42px; align-self: flex-start; background: #fff; border-radius: 0 0 7px 7px; padding: 6px 12px 0; box-shadow: 0 0 1px rgba(0,0,0,.3); }
.tab span { display: block; border-bottom: 3px solid #107c41; font-weight: 600; font-size: 18.500px; line-height: 28px; letter-spacing: 0; white-space: nowrap; }
.sep { margin-left: 6px; width: 1px; height: 27px; background: #ccc; }
.plus { margin-left: 63px; }
.d2 { margin-left: 801px; }
.hscroll { margin-left: 22px; width: 711px; height: 26px; background: #f4f4f4; border-radius: 13px; display: flex; align-items: center; padding: 0 8px; }
.hscroll i { width: 608px; height: 12px; border-radius: 6px; background: #707070; margin: 0 auto 0 17px; }

/* status bar */
.status { height: 35px; flex: none; display: grid; grid-template-columns: 101px 26px 1130px 25px 176px 60px 60px 60px 28px 155px 32px 48px; align-items: center; padding-left: 17px; background: #f4f4f4; border-top: 1px solid #fff; border-bottom: 2px solid #b3b5b6; font-size: 15px; letter-spacing: -0.17px; white-space: nowrap; color: #333; }
.disp { letter-spacing: 0; }
.view { height: 32px; display: flex; align-items: center; justify-content: center; }
.view.on { background: #e0e0e0; }
.view + svg { margin-left: 8px; }

/* taskbar */
.taskbar { height: 70px; flex: none; display: flex; align-items: flex-start; padding-left: 17px; background: linear-gradient(90deg, #e1e0df 0, #e1e0df 570px, #cfe3ea 680px, #cfe3ea 1285px, #e1e0df 1350px); }
.app-ic { width: 66px; height: 70px; flex: none; display: flex; align-items: center; justify-content: center; position: relative; }
.start { padding-right: 4px; }
.run::after { content: ""; position: absolute; left: 28px; top: 58px; width: 10px; height: 5px; border-radius: 3px; background: #7d7d7d; }
.badge { position: absolute; left: 37px; top: 9px; width: 24px; height: 24px; border-radius: 50%; background: #437a8c; color: #fff; font-size: 16px; font-weight: 400; line-height: 23px; text-align: center; }
.split { margin-left: 4px; width: 1px; height: 70px; background: #bdd2da; }
.active { width: 56px; height: 57px; margin: 6px 5px 0 7px; background: #e9f1f7; border-radius: 6px; box-shadow: 0 1px 2px rgba(0,0,0,.2); }
.active::after { content: ""; position: absolute; left: 16px; top: 52px; width: 24px; height: 5px; border-radius: 3px; background: #437a8c; }
.more { gap: 4px; }
.more i { width: 5px; height: 5px; border-radius: 50%; background: #1a1a1a; }
.weather { margin: 15px 0 0 78px; width: 48px; height: 34px; position: relative; }
.weather span { position: absolute; left: 12px; top: -10px; width: 36px; height: 29px; border-radius: 15px; background: #f4f4f4; font-size: 16px; line-height: 29px; text-align: center; }
.up { margin: 28px 28px 0 37px; }
.kb { margin: 25px 24px 0 0; }
.pad { margin: 26px 0 0; }
.lang { width: 60px; margin: 12px 15px 0; font-size: 17px; line-height: 23px; text-align: center; }
.wifi { margin: 26px 12px 0 1px; }
.spk { margin: 24px 11px 0 0; }
.bat { margin: 27px 0 0; }
.clock { width: 111px; margin-top: 10px; font-size: 17px; line-height: 24px; text-align: right; letter-spacing: 0; }
.bell { margin: 23px 0 0 13px; }
```
